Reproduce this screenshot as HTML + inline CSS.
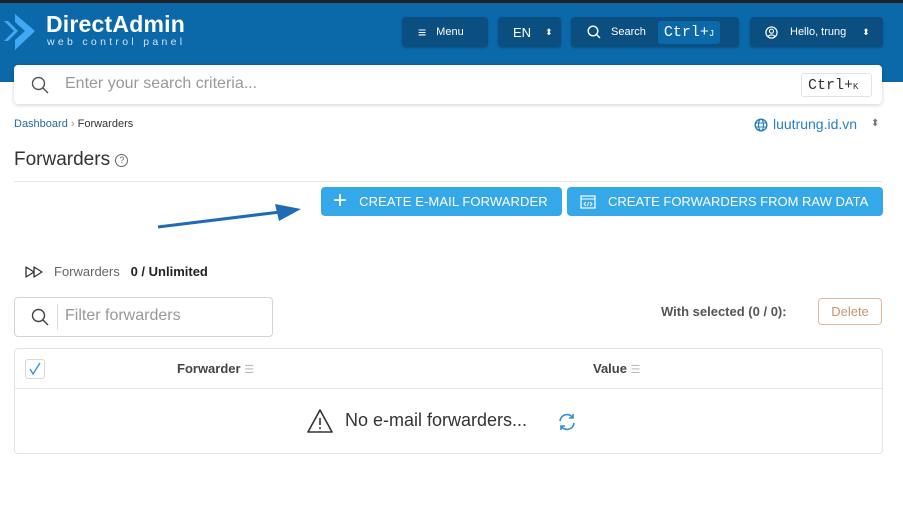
<!DOCTYPE html>
<html><head><meta charset="utf-8"><style>
*{box-sizing:border-box;margin:0;padding:0}
body{width:903px;height:505px;overflow:hidden;background:#fff;font-family:"Liberation Sans",sans-serif;position:relative;color:#333}
.abs{position:absolute}
.hdr{left:0;top:0;width:903px;height:82px;background:#0b69aa}
.top{left:0;top:0;width:903px;height:3px;background:#1f2227}
.hb{background:#0a4f80;border-radius:4px;color:#fff;font-size:11px;display:flex;align-items:center;box-shadow:0 1px 2px rgba(0,0,0,.25)}
.btn{background:#35a8ea;color:#fff;border-radius:4px;font-size:13px;display:flex;align-items:center;letter-spacing:.1px}
</style></head><body>
<div class="abs hdr"></div><div class="abs top"></div>
<svg class="abs" style="left:3px;top:12px" width="36" height="40" viewBox="0 0 36 40"><path d="M1 9 L11 19 L1 29 L5 29 L15 19 L5 9Z" fill="#3fa9f5"/><path d="M12 2 L32 19 L12 38 L12 28 L22 19 L12 10Z" fill="#3fa9f5"/></svg>
<div class="abs" style="left:46px;top:11px;color:#fff;font-size:23px;font-weight:bold;letter-spacing:.2px">DirectAdmin</div>
<div class="abs" style="left:47px;top:36px;color:#cfe3f3;font-size:10.5px;letter-spacing:3.3px">web control panel</div>
<div class="abs hb" style="left:402px;top:17px;width:86px;height:30px;padding-left:16px"><span style="font-size:14px;margin-right:10px">≡</span>Menu</div>
<div class="abs hb" style="left:498px;top:17px;width:63px;height:30px;padding-left:15px;font-size:13px">EN<span style="margin-left:14px;font-size:9px">⬍</span></div>
<div class="abs hb" style="left:571px;top:17px;width:168px;height:30px;padding-left:16px"><svg width="14" height="14" viewBox="0 0 14 14"><circle cx="6" cy="6" r="4.8" stroke="#fff" stroke-width="1.4" fill="none"/><path d="M9.5 9.5L13 13" stroke="#fff" stroke-width="1.4"/></svg><span style="margin-left:10px">Search</span><span style="margin-left:12px;background:#0b69aa;border-radius:3px;padding:3px 6px;font-family:'Liberation Mono',monospace;font-size:15px">Ctrl+<small style="font-size:9px">J</small></span></div>
<div class="abs hb" style="left:750px;top:17px;width:133px;height:30px;padding-left:15px"><svg width="13" height="13" viewBox="0 0 14 14"><circle cx="7" cy="7" r="6" stroke="#fff" stroke-width="1.3" fill="none"/><circle cx="7" cy="5.5" r="2.2" stroke="#fff" stroke-width="1.2" fill="none"/><path d="M3 11.5c2-2.5 6-2.5 8 0" stroke="#fff" stroke-width="1.2" fill="none"/></svg><span style="margin-left:12px">Hello, trung</span><span style="margin-left:16px;font-size:9px">⬍</span></div>
<div class="abs" style="left:14px;top:65px;width:868px;height:39px;background:#fff;border-radius:4px;box-shadow:0 1px 4px rgba(0,0,0,.18)"></div>
<svg class="abs" style="left:31px;top:76px" width="18" height="18" viewBox="0 0 18 18"><circle cx="7.5" cy="7.5" r="6" stroke="#555" stroke-width="1.4" fill="none"/><path d="M12 12L17 17" stroke="#555" stroke-width="1.4"/></svg>
<div class="abs" style="left:65px;top:75px;font-size:16px;color:#999">Enter your search criteria...</div>
<div class="abs" style="left:801px;top:73px;width:71px;height:24px;border:1px solid #e2e2e2;border-radius:3px;font-family:'Liberation Mono',monospace;font-size:15px;color:#333;padding:3px 0 0 6px">Ctrl+<small style="font-size:9px">K</small></div>
<div class="abs" style="left:14px;top:118px;font-size:11px;color:#2a6a9a">Dashboard <span style="color:#999">›</span> <span style="color:#333">Forwarders</span></div>
<svg class="abs" style="left:754px;top:118px" width="14" height="14" viewBox="0 0 14 14"><circle cx="7" cy="7" r="5.8" stroke="#2a7fc0" stroke-width="1.5" fill="none"/><ellipse cx="7" cy="7" rx="2.5" ry="5.8" stroke="#2a7fc0" stroke-width="1.2" fill="none"/><path d="M1.5 5h11M1.5 9h11" stroke="#2a7fc0" stroke-width="1.1"/></svg>
<div class="abs" style="left:773px;top:116px;font-size:14px;color:#2a7fc0">luutrung.id.vn</div>
<div class="abs" style="left:871px;top:118px;font-size:10px;color:#777">⬍</div>
<div class="abs" style="left:14px;top:149px;font-size:19px;color:#333">Forwarders <span style="display:inline-block;width:13px;height:13px;border:1.3px solid #666;border-radius:50%;font-size:9px;text-align:center;line-height:11px;color:#666;vertical-align:2px">?</span></div>
<div class="abs" style="left:14px;top:181px;width:868px;height:1px;background:#e6e6e6"></div>
<div class="abs btn" style="left:321px;top:187px;width:241px;height:29px;padding-left:12px"><span style="font-size:24px;font-weight:200;margin-right:12px;line-height:1;margin-top:-2px">+</span>CREATE E-MAIL FORWARDER</div>
<div class="abs btn" style="left:567px;top:187px;width:316px;height:29px;padding-left:13px;letter-spacing:0"><svg width="16" height="14" viewBox="0 0 16 14" style="margin-right:12px"><rect x="1" y="1" width="14" height="12" fill="none" stroke="#fff" stroke-width="1.2"/><path d="M1 4h14" stroke="#fff"/><path d="M6 7l-2 2 2 2M10 7l2 2-2 2M8.5 7l-1 4" stroke="#fff" stroke-width=".9" fill="none"/></svg>CREATE FORWARDERS FROM RAW DATA</div>
<svg class="abs" style="left:150px;top:200px" width="155" height="30" viewBox="0 0 155 30"><path d="M8 27L130 12" stroke="#1f6bb5" stroke-width="3"/><path d="M125 4L151 9L129 21Z" fill="#1f6bb5"/></svg>
<svg class="abs" style="left:25px;top:266px" width="20" height="12" viewBox="0 0 20 12"><path d="M1 1L9 6L1 11Z M9 1L17 6L9 11Z" fill="none" stroke="#333" stroke-width="1.3" stroke-linejoin="round"/></svg>
<div class="abs" style="left:54px;top:264px;font-size:13px;color:#666">Forwarders&nbsp;&nbsp; <b style="color:#222">0 / Unlimited</b></div>
<div class="abs" style="left:14px;top:297px;width:259px;height:40px;border:1px solid #d4d4d4;border-radius:4px"></div>
<svg class="abs" style="left:31px;top:308px" width="18" height="18" viewBox="0 0 18 18"><circle cx="7.5" cy="7.5" r="6" stroke="#444" stroke-width="1.4" fill="none"/><path d="M12 12L17 17" stroke="#444" stroke-width="1.4"/></svg>
<div class="abs" style="left:57px;top:304px;width:1px;height:26px;background:#ddd"></div>
<div class="abs" style="left:65px;top:307px;font-size:16px;color:#999">Filter forwarders</div>
<div class="abs" style="left:661px;top:304px;font-size:13px;font-weight:bold;color:#555">With selected (0 / 0):</div>
<div class="abs" style="left:818px;top:298px;width:64px;height:27px;border:1px solid #e0b998;border-radius:4px;color:#c89570;font-size:13px;text-align:center;line-height:25px">Delete</div>
<div class="abs" style="left:14px;top:348px;width:869px;height:106px;border:1px solid #e3e3e3;border-radius:4px"></div>
<div class="abs" style="left:14px;top:388px;width:869px;height:1px;background:#e6e6e6"></div>
<div class="abs" style="left:25px;top:359px;width:20px;height:20px;border:1px solid #d8d8d8;border-radius:3px"></div>
<svg class="abs" style="left:28px;top:362px" width="14" height="14" viewBox="0 0 14 14"><path d="M2 7l3 5 7-11" stroke="#2b8fd8" stroke-width="1.3" fill="none"/></svg>
<div class="abs" style="left:177px;top:361px;font-size:13px;font-weight:bold;color:#444">Forwarder <span style="color:#bbb;font-weight:normal;font-size:11px">☰</span></div>
<div class="abs" style="left:593px;top:361px;font-size:13px;font-weight:bold;color:#444">Value <span style="color:#bbb;font-weight:normal;font-size:11px">☰</span></div>
<svg class="abs" style="left:306px;top:408px" width="28" height="26" viewBox="0 0 28 26"><path d="M14 2L26 24H2Z" fill="none" stroke="#333" stroke-width="1.6" stroke-linejoin="round"/><path d="M14 10v7" stroke="#333" stroke-width="1.6"/><circle cx="14" cy="20" r="1" fill="#333"/></svg>
<div class="abs" style="left:345px;top:410px;font-size:18px;color:#333">No e-mail forwarders...</div>
<svg class="abs" style="left:557px;top:412px" width="20" height="20" viewBox="0 0 20 20"><path d="M3 9a7 7 0 0 1 13-3M17 11a7 7 0 0 1-13 3" stroke="#2b8fd8" stroke-width="1.6" fill="none"/><path d="M16 2v4h-4M4 18v-4h4" stroke="#2b8fd8" stroke-width="1.6" fill="none"/></svg>
</body></html>
